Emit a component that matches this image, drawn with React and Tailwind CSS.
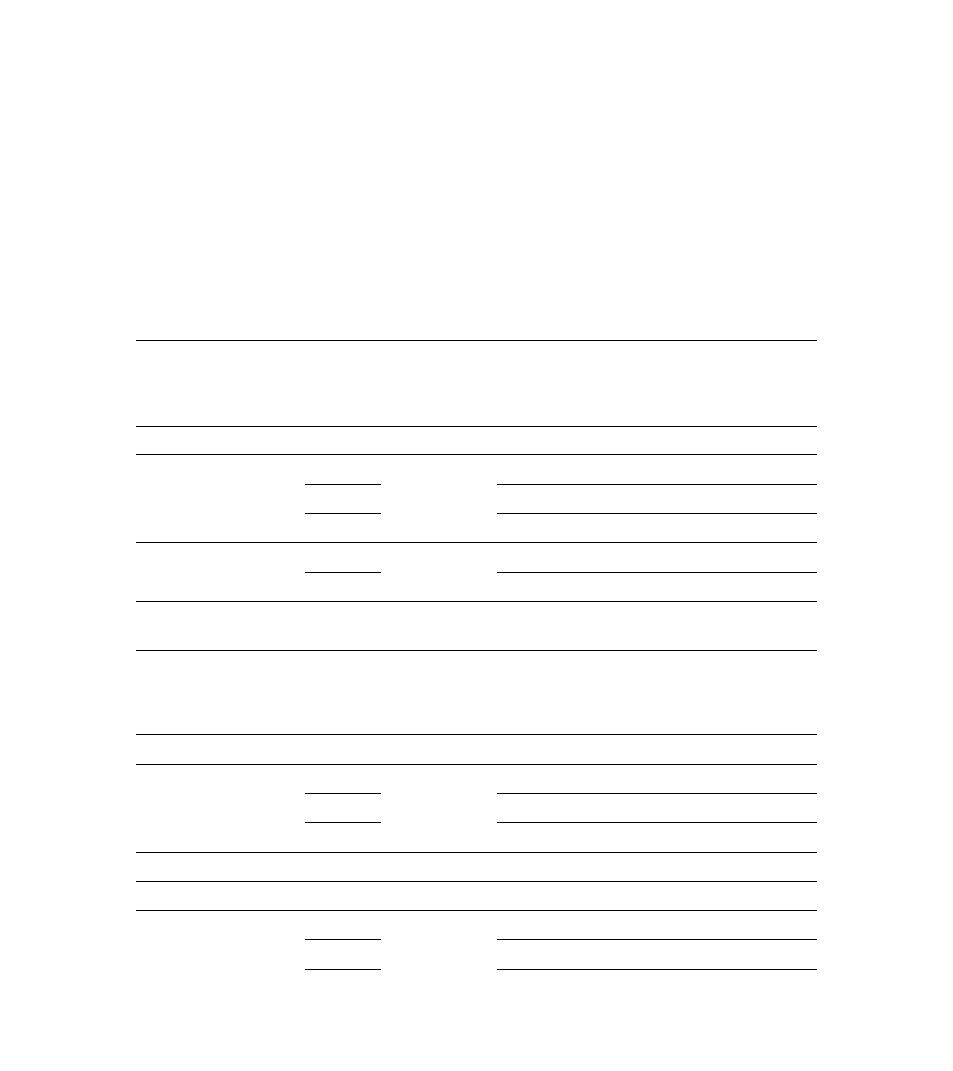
import React from 'react';

// each row: h = total height incl. top border, or subs = heights of stacked sub-rows
const rows = [
  { h: 86 },
  { h: 28 },
  { subs: [29, 29, 29] },
  { subs: [29, 29] },
  { h: 49 },
  { h: 84 },
  { h: 30 },
  { subs: [28, 29, 30] },
  { h: 29 },
  { h: 29 },
  { subs: [28, 30, 29] },
];

function SubCol({ subs, className }) {
  return (
    <div className={`flex flex-col ${className}`}>
      {subs.map((s, i) => (
        <div
          key={i}
          className={i === 0 ? '' : 'border-t border-black'}
          style={{ height: s }}
        ></div>
      ))}
    </div>
  );
}

function Row({ row }) {
  if (!row.subs) {
    return <div className="border-t border-black" style={{ height: row.h }}></div>;
  }
  return (
    <div className="flex border-t border-black">
      <div className="w-[169px]"></div>
      <SubCol subs={row.subs} className="w-[76px]" />
      <div className="w-[116px]"></div>
      <SubCol subs={row.subs} className="flex-1" />
    </div>
  );
}

export default function App() {
  return (
    <div className="min-h-screen bg-white pt-[340px] font-['Liberation_Sans',sans-serif]">
      <div className="mx-auto w-[681px]">
        {rows.map((r, i) => (
          <Row key={i} row={r} />
        ))}
      </div>
    </div>
  );
}
